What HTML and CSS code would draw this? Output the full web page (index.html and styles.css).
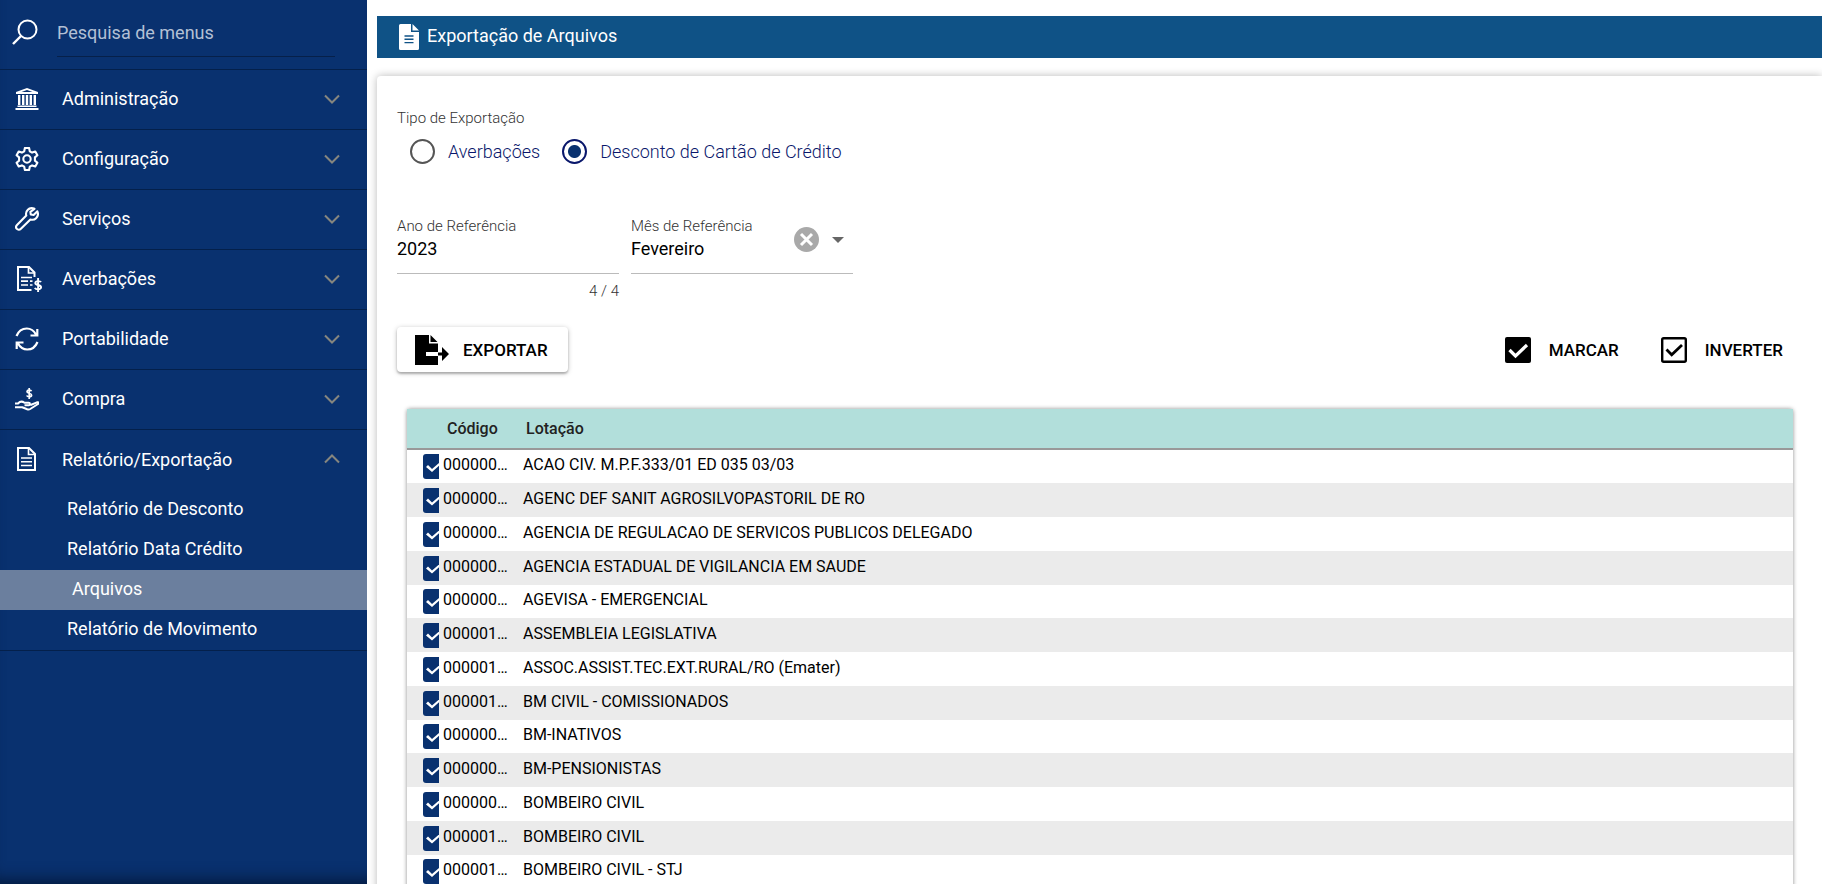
FILE: index.html
```html
<!DOCTYPE html>
<html lang="pt-BR">
<head>
<meta charset="utf-8">
<title>Exportação de Arquivos</title>
<link rel="stylesheet" href="styles.css">
</head>
<body>
<div class="app">
  <aside class="sidebar">
    <label class="search">
      <svg class="search-icon" viewBox="0 0 26 26" fill="none" stroke="currentColor" stroke-width="2"><circle cx="15.500" cy="10.500" r="9"/><path d="M9 17l-8 8" stroke-width="2.400"/></svg>
      <input class="search-input" type="text" placeholder="Pesquisa de menus" aria-label="Pesquisa de menus">
    </label>
    <nav>
      <button class="menu" type="button">
        <svg class="menu-icon" viewBox="0 0 24 24" fill="currentColor"><path d="M12 1L1 5v2h22V5zM12 3l5.500 2h-11zM3 8h2.400v10H3zM7 8h2.400v10H7zM10.800 8h2.400v10h-2.400zM14.600 8H17v10h-2.400zM18.600 8H21v10h-2.400zM2.500 18.500h19V20h-19zM.5 21h23v2H.5z" fill-rule="evenodd"/></svg>
        <span class="menu-text">Administração</span>
        <svg class="chevron" viewBox="0 0 16 10"><path d="M1 1.500l7 7 7-7"/></svg>
      </button>
      <button class="menu" type="button">
        <svg class="menu-icon" viewBox="0 0 24 24" fill="none" stroke="currentColor" stroke-width="2.100" stroke-linejoin="round"><circle cx="12" cy="12" r="3.700"/><path d="M9.900 1h4.200l.7 3.300 2.300 1.300 3.200-1.100 2.100 3.700-2.500 2.200v3.200l2.500 2.200-2.100 3.700-3.200-1.100-2.300 1.300-.7 3.300H9.900l-.7-3.300-2.300-1.300-3.200 1.100-2.100-3.700 2.500-2.200v-3.200L1.600 8.200l2.100-3.700 3.200 1.100 2.300-1.300z"/></svg>
        <span class="menu-text">Configuração</span>
        <svg class="chevron" viewBox="0 0 16 10"><path d="M1 1.500l7 7 7-7"/></svg>
      </button>
      <button class="menu" type="button">
        <svg class="menu-icon" viewBox="0 0 24 24" fill="none" stroke="currentColor" stroke-width="2.100" stroke-linejoin="round"><path d="M19.500 1.800c-2.400-1.100-5.200-.7-6.900 1.200-1.500 1.500-1.900 3.500-1.300 5.600L2 18c-1.200 1.200-1.200 2.800-.2 3.900s2.900 1.100 4.100-.1l9.500-9.300c2 .6 4.200.2 5.700-1.300 1.800-1.800 2.300-4.500 1.300-6.900L18.600 8l-2.800-.5-.4-2.700z"/></svg>
        <span class="menu-text">Serviços</span>
        <svg class="chevron" viewBox="0 0 16 10"><path d="M1 1.500l7 7 7-7"/></svg>
      </button>
      <button class="menu" type="button">
        <svg class="menu-icon wide" viewBox="0 0 26 28" fill="none" stroke="currentColor" stroke-width="2"><path d="M15.500 25H2V2h11l5.500 5.500V12"/><path d="M12.500 2v6h6M5 12.500h11M5 16.200h7M5 20h7M14 16.200h2.500M14 20h2.500" stroke-width="1.700"/><path d="M25 17.200c-.6-1.200-5.400-1.800-5.700.8-.2 2.400 5.900 1.600 5.800 4.300-.2 2.700-5.400 2.300-6.300.6M22.100 13v14" stroke-width="1.900"/></svg>
        <span class="menu-text">Averbações</span>
        <svg class="chevron" viewBox="0 0 16 10"><path d="M1 1.500l7 7 7-7"/></svg>
      </button>
      <button class="menu" type="button">
        <svg class="menu-icon" viewBox="0 0 24 24" fill="none" stroke="currentColor" stroke-width="2.200"><path d="M1.500 9C3.500 4 6.800 1.500 11.800 1.500c4 0 7 2 9.200 6M22.300 2v6.500h-6.800M22.500 15c-2 5-5.300 7.500-10.300 7.500-4 0-7-2-9.200-6M1.700 22v-6.500h6.800"/></svg>
        <span class="menu-text">Portabilidade</span>
        <svg class="chevron" viewBox="0 0 16 10"><path d="M1 1.500l7 7 7-7"/></svg>
      </button>
      <button class="menu" type="button">
        <svg class="menu-icon" viewBox="0 0 24 24" fill="none" stroke="currentColor" stroke-width="2" stroke-linejoin="round"><path d="M16.500 4.300c-.5-1.300-4.300-1.700-4.500.3-.2 2 4.700 1.300 4.600 3.500-.1 2-4.200 1.900-4.900.4M14.200 1v11" stroke-width="1.700"/><path d="M0 16.500h3c2-2.200 4.500-2.200 6.500-.7h4.200c1.700 0 1.700 2.500 0 2.500H9.500M15.500 18l6.500-2.700c1.700-.5 2.400.8 1 1.700l-7.800 5c-1 .6-2 .6-3 .3l-5-2H0"/></svg>
        <span class="menu-text">Compra</span>
        <svg class="chevron" viewBox="0 0 16 10"><path d="M1 1.500l7 7 7-7"/></svg>
      </button>
      <div class="group">
        <button class="menu" type="button" aria-expanded="true">
          <svg class="menu-icon" viewBox="0 0 24 24" fill="none" stroke="currentColor" stroke-width="2"><path d="M3 1h11l6 6v16H3z"/><path d="M13.500 1v6.500H20M6 11h11M6 14.800h11M6 18.500h11" stroke-width="1.600"/></svg>
          <span class="menu-text">Relatório/Exportação</span>
          <svg class="chevron" viewBox="0 0 16 10"><path d="M1 8.500l7-7 7 7"/></svg>
        </button>
        <a class="sub" href="#">Relatório de Desconto</a>
        <a class="sub" href="#">Relatório Data Crédito</a>
        <a class="sub active" href="#">Arquivos</a>
        <a class="sub" href="#">Relatório de Movimento</a>
      </div>
    </nav>
  </aside>

  <main class="main">
    <header class="titlebar">
      <svg class="title-icon" viewBox="0 0 20 26"><path d="M1.500 0H12v8h8v16.500a1.500 1.500 0 0 1-1.500 1.500h-17A1.500 1.500 0 0 1 0 24.500v-23A1.500 1.500 0 0 1 1.500 0zM13.500 0L20 6.500h-6.500z" fill="#fff"/><path d="M5.500 12h9M5.500 15.300h9M5.500 18.600h9" stroke="#0f5286" stroke-width="1.400"/></svg>
      <h1 class="title">Exportação de Arquivos</h1>
    </header>

    <section class="card">
      <fieldset class="types">
        <legend class="field-label">Tipo de Exportação</legend>
        <div class="radios">
          <label class="radio"><input type="radio" name="tipo"><span>Averbações</span></label>
          <label class="radio"><input type="radio" name="tipo" checked><span>Desconto de Cartão de Crédito</span></label>
        </div>
      </fieldset>

      <div class="fields">
        <div class="field">
          <div class="control">
            <div class="entry">
              <label class="field-label" for="ano">Ano de Referência</label>
              <input class="value" id="ano" type="text" value="2023" maxlength="4">
            </div>
          </div>
          <div class="counter">4 / 4</div>
        </div>
        <div class="field">
          <div class="control">
            <div class="entry">
              <label class="field-label" for="mes">Mês de Referência</label>
              <select class="value" id="mes"><option>Fevereiro</option></select>
            </div>
            <button class="clear" type="button" aria-label="Limpar">
              <svg viewBox="0 0 25 25"><circle cx="12.500" cy="12.500" r="12.500" fill="#a9a9a9"/><path d="M7 7l11 11M18 7L7 18" stroke="#fff" stroke-width="3"/></svg>
            </button>
            <svg class="arrow" viewBox="0 0 12 6"><path d="M0 0h12L6 6z" fill="#666"/></svg>
          </div>
        </div>
      </div>

      <div class="toolbar">
        <button class="export" type="button">
          <svg class="export-icon" viewBox="0 0 34 30"><path d="M0 0h14v8.500h9V17H11v4h12v9H0z"/><path d="M15.500 0L22.500 7h-7zM23 17.500h4V12l7 7-7 7v-5.500h-4z"/></svg>
          EXPORTAR
        </button>
        <div class="actions">
          <button class="action" type="button">
            <svg class="box-icon" viewBox="0 0 26 26"><rect width="26" height="26" rx="2"/><path d="M4.500 13l6 6L22 8" fill="none" stroke="#fff" stroke-width="3.200"/></svg>
            MARCAR
          </button>
          <button class="action" type="button">
            <svg class="box-icon" viewBox="0 0 26 26" fill="none" stroke="#000"><rect x="1.200" y="1.200" width="23.600" height="23.600" rx="1.500" stroke-width="2.400"/><path d="M5.500 12.500l5.200 5.200L21 8" stroke-width="2.800"/></svg>
            INVERTER
          </button>
        </div>
      </div>

      <table class="grid">
        <thead><tr><th class="col-check"></th><th class="col-code">Código</th><th>Lotação</th></tr></thead>
        <tbody>
          <tr><td><input type="checkbox" checked aria-label="Selecionar ACAO CIV."></td><td>000000…</td><td>ACAO CIV. M.P.F.333/01 ED 035 03/03</td></tr>
          <tr><td><input type="checkbox" checked aria-label="Selecionar AGENC DEF SANIT"></td><td>000000…</td><td>AGENC DEF SANIT AGROSILVOPASTORIL DE RO</td></tr>
          <tr><td><input type="checkbox" checked aria-label="Selecionar AGENCIA DE REGULACAO"></td><td>000000…</td><td>AGENCIA DE REGULACAO DE SERVICOS PUBLICOS DELEGADO</td></tr>
          <tr><td><input type="checkbox" checked aria-label="Selecionar AGENCIA ESTADUAL"></td><td>000000…</td><td>AGENCIA ESTADUAL DE VIGILANCIA EM SAUDE</td></tr>
          <tr><td><input type="checkbox" checked aria-label="Selecionar AGEVISA"></td><td>000000…</td><td>AGEVISA - EMERGENCIAL</td></tr>
          <tr><td><input type="checkbox" checked aria-label="Selecionar ASSEMBLEIA LEGISLATIVA"></td><td>000001…</td><td>ASSEMBLEIA LEGISLATIVA</td></tr>
          <tr><td><input type="checkbox" checked aria-label="Selecionar ASSOC.ASSIST."></td><td>000001…</td><td>ASSOC.ASSIST.TEC.EXT.RURAL/RO (Emater)</td></tr>
          <tr><td><input type="checkbox" checked aria-label="Selecionar BM CIVIL"></td><td>000001…</td><td>BM CIVIL - COMISSIONADOS</td></tr>
          <tr><td><input type="checkbox" checked aria-label="Selecionar BM-INATIVOS"></td><td>000000…</td><td>BM-INATIVOS</td></tr>
          <tr><td><input type="checkbox" checked aria-label="Selecionar BM-PENSIONISTAS"></td><td>000000…</td><td>BM-PENSIONISTAS</td></tr>
          <tr><td><input type="checkbox" checked aria-label="Selecionar BOMBEIRO CIVIL"></td><td>000000…</td><td>BOMBEIRO CIVIL</td></tr>
          <tr><td><input type="checkbox" checked aria-label="Selecionar BOMBEIRO CIVIL"></td><td>000001…</td><td>BOMBEIRO CIVIL</td></tr>
          <tr><td><input type="checkbox" checked aria-label="Selecionar BOMBEIRO CIVIL - STJ"></td><td>000001…</td><td>BOMBEIRO CIVIL - STJ</td></tr>
        </tbody>
      </table>
    </section>
  </main>
</div>
</body>
</html>
```

FILE: styles.css
```css
* { box-sizing: border-box; }
body { margin: 0; background: #fff; font-family: Roboto, sans-serif; font-size: 18px; color: #000; }
button, input, select { font: inherit; color: inherit; margin: 0; padding: 0; border: 0; background: none; }
svg { display: block; flex: none; }

.app { display: flex; height: 100vh; overflow: hidden; }

.sidebar { flex: none; width: 367px; background: #09316f; color: #fff; box-shadow: inset 0 -16px 16px -12px #04193b; }
.search { display: flex; height: 70px; padding: 9px 32px 12px 12px; border-bottom: 1px solid #04204b; }
.search-icon { width: 26px; height: 26px; margin-top: 10px; }
.search-input { flex: 1; min-width: 0; margin-left: 19px; border-bottom: 1px solid #06204a; outline: 0; }
.search-input::placeholder { color: #b3c0d5; opacity: 1; }

.menu { display: flex; align-items: center; width: 100%; height: 60px; padding: 0 27px 2px 15px; border-bottom: 1px solid #04204b; text-align: left; }
.menu-icon { width: 24px; height: 24px; }
.menu-icon.wide { width: 28px; height: 28px; }
.menu-text { flex: 1; margin-left: 23px; }
.menu-icon.wide + .menu-text { margin-left: 19px; }
.chevron { width: 16px; height: 10px; fill: none; stroke: #86867f; stroke-width: 2; }
.group { border-bottom: 1px solid #04204b; }
.group .menu { border-bottom: 0; }
.sub { display: block; height: 40px; padding-left: 67px; line-height: 38px; color: #fff; text-decoration: none; }
.sub.active { padding-left: 72px; background: #6b7f9e; }

.main { flex: 1; min-width: 0; padding: 16px 0 0 10px; }
.titlebar { display: flex; align-items: center; gap: 8px; height: 42px; padding-left: 22px; background: #0f5286; color: #fff; }
.title-icon { width: 20px; height: 26px; }
.title { margin: 0; padding-bottom: 2px; font-size: 18px; line-height: 22px; font-weight: 400; }

.card { min-height: 100%; margin-top: 18px; padding: 32px 0 0 20px; border-radius: 4px 0 0 0; box-shadow: 0 0 8px rgba(0, 0, 0, .28); }
.field-label { padding: 0; font-size: 15px; line-height: 20px; font-weight: 300; color: #333; }
.types { margin: 0; padding: 0; border: 0; }
.radios { display: flex; gap: 22px; padding: 10px 0 1px 13px; font-weight: 300; }
.radio { display: flex; align-items: center; gap: 13px; color: #09176b; height: 27px; }
.radio input { appearance: none; width: 25px; height: 25px; border: 2px solid #555; border-radius: 50%; }
.radio input:checked { border-color: #09176b; background: radial-gradient(circle, #09316f 6px, transparent 7px); }

.fields { display: flex; gap: 12px; margin-top: 46px; }
.field { width: 222px; }
.control { display: flex; align-items: center; height: 62px; padding-bottom: 6px; border-bottom: 1px solid #bbb; }
.entry { flex: 1; min-width: 0; align-self: flex-start; padding-top: 4px; }
.entry .field-label, .value { display: block; }
.value { width: 100%; height: 24px; appearance: none; }
.clear { width: 25px; height: 25px; }
.arrow { width: 12px; height: 6px; margin: 0 9px 0 13px; }
.counter { padding-top: 7px; font-size: 15px; line-height: 20px; text-align: right; font-weight: 300; color: #333; }

.toolbar { display: flex; justify-content: space-between; margin-top: 26px; padding-right: 39px; font-size: 17px; font-weight: 500; }
.export { display: flex; align-items: center; gap: 14px; height: 45px; padding: 0 20px 0 18px; border-radius: 4px; background: #fff; box-shadow: 0 1px 5px rgba(0, 0, 0, .25), 0 2px 2px rgba(0, 0, 0, .2); }
.export-icon { width: 34px; height: 30px; }
.actions { display: flex; gap: 42px; }
.action { display: flex; align-items: center; gap: 18px; }
.box-icon { width: 26px; height: 26px; }

.grid { width: calc(100% - 39px); margin: 37px 29px 0 10px; border-collapse: separate; border-spacing: 0; table-layout: fixed; border-radius: 3px 3px 0 0; box-shadow: 0 0 4px rgba(0, 0, 0, .45); font-size: 16px; }
.grid th { height: 41px; padding: 0 0 0 3px; border-bottom: 2px solid #999; background: #b2dfdb; text-align: left; font-weight: 500; color: #222; }
.grid .col-check { width: 36px; }
.grid .col-code { width: 80px; padding-left: 4px; }
.grid td { height: 34px; padding: 0 0 4px; white-space: nowrap; }
.grid tr:nth-child(4n+1) td { height: 33px; }
.grid tbody tr:nth-child(even) { background: #ebebeb; }
.grid td:first-child { padding: 0 4px 0 16px; }
.grid input { display: block; appearance: none; width: 16px; height: 25px; border-radius: 3px 0 0 3px; background: linear-gradient(#09316f, #09316f); overflow: hidden; }
.grid input::after { content: ""; display: block; width: 15px; height: 9px; margin: 9px 0 0 3px; background: #fff; clip-path: polygon(0 4px, 2px 2px, 6px 6px, 13px 0, 15px 1px, 6px 9px); }
```
